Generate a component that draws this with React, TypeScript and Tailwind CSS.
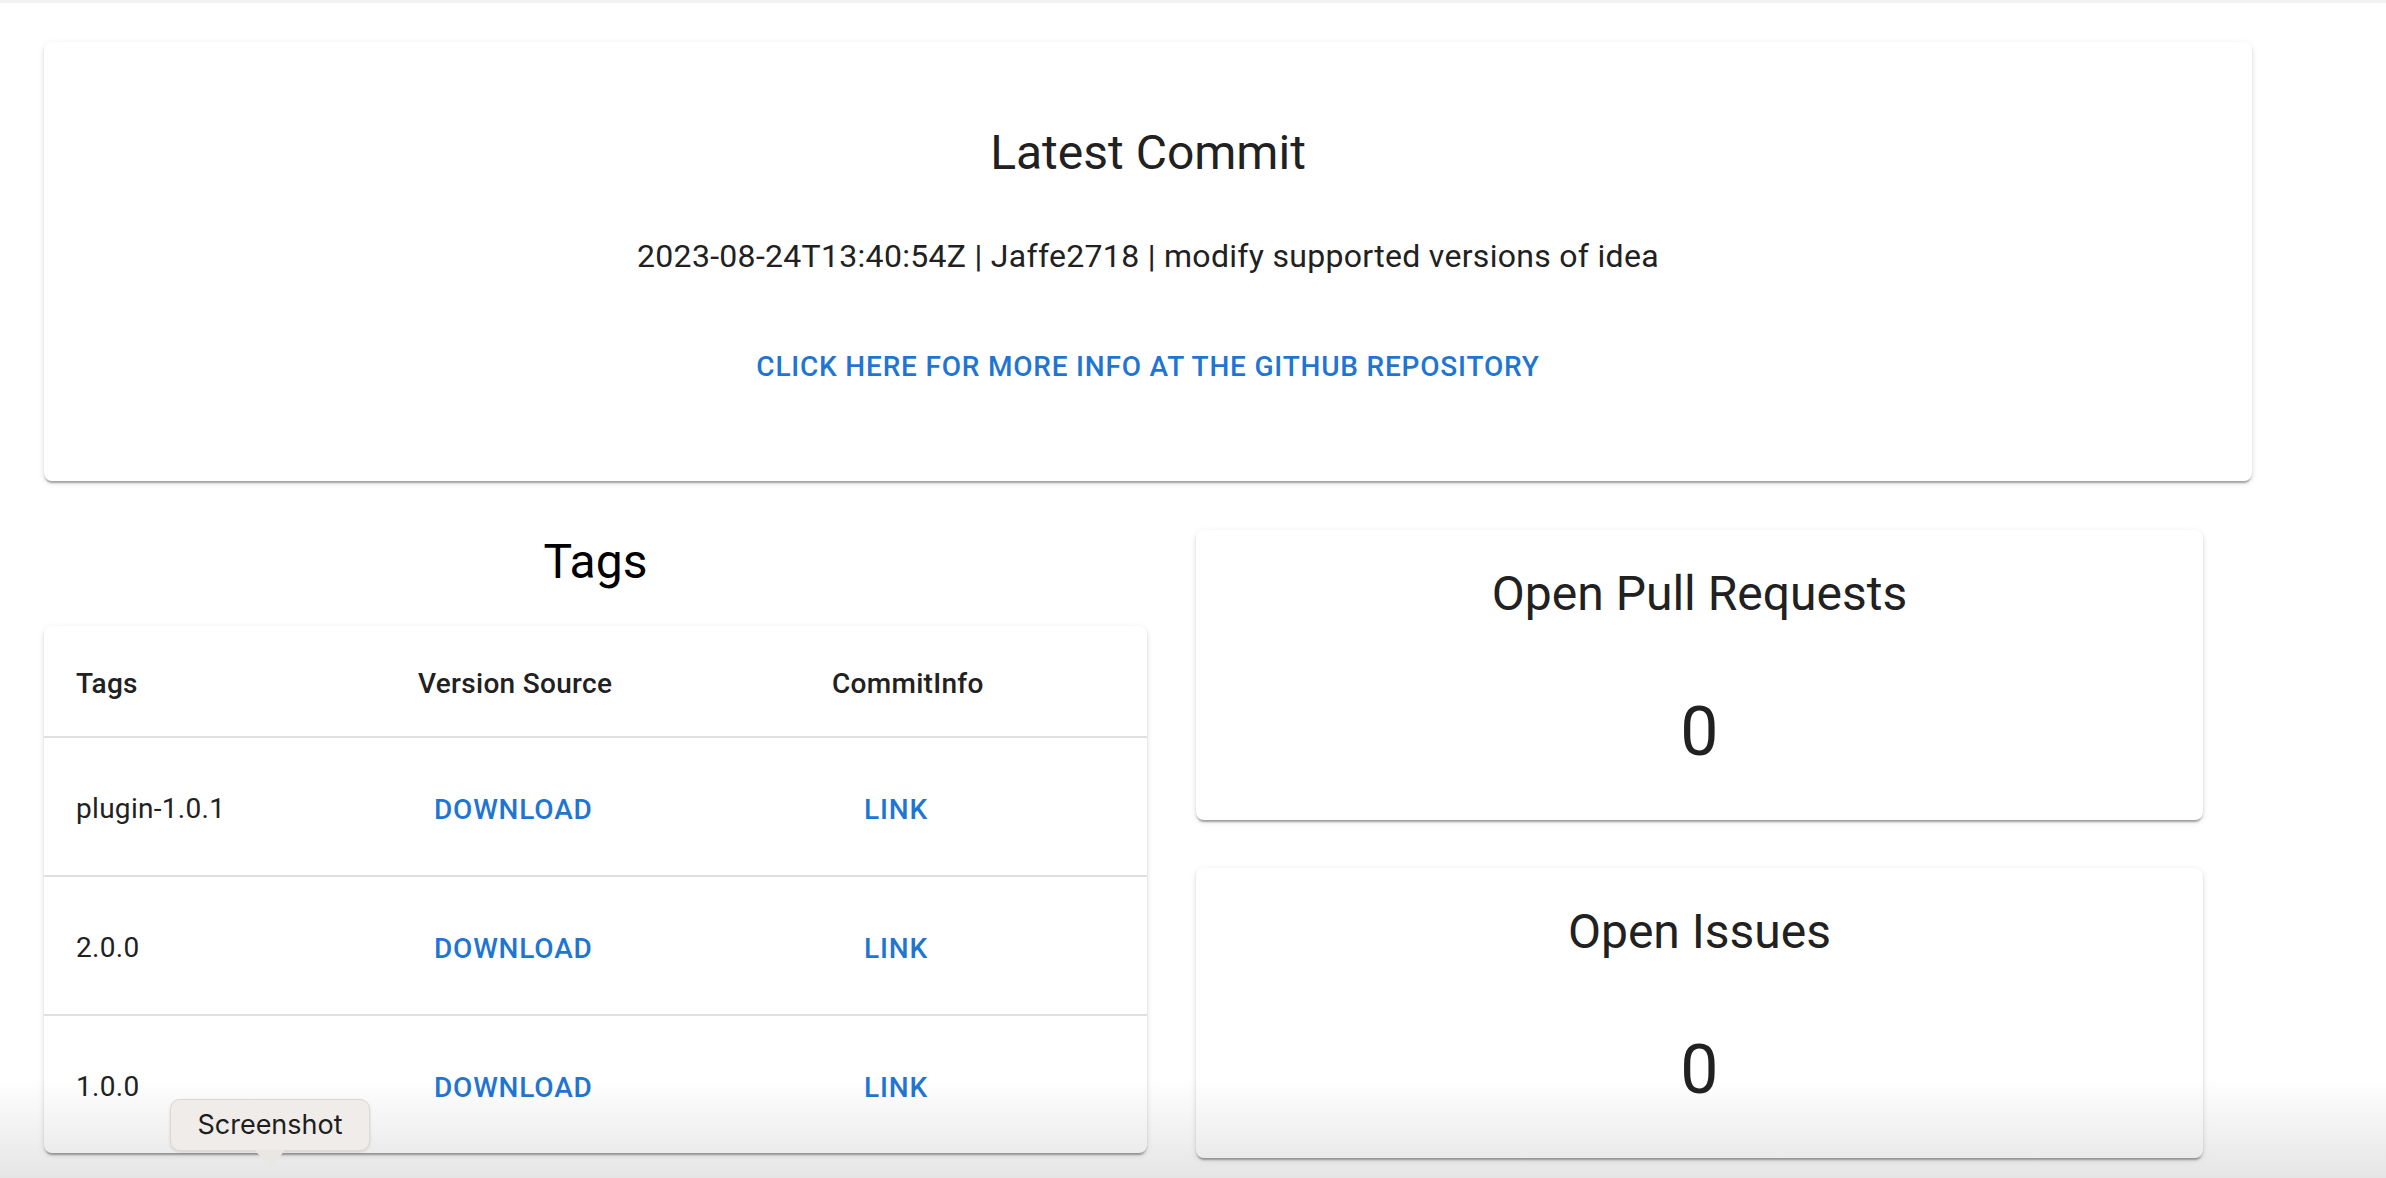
const cardShadow =
  'shadow-[0_4px_2px_-2px_rgba(0,0,0,0.2),0_2px_2px_0_rgba(0,0,0,0.14),0_2px_6px_0_rgba(0,0,0,0.12)]';

const tags = ['plugin-1.0.1', '2.0.0', '1.0.0'];

const TextButton = ({ label, className = '' }: { label: string; className?: string }) => (
  <button
    className={`min-w-[128px] rounded-[8px] px-[16px] py-[12px] text-[28px] leading-[49px] font-medium uppercase tracking-[0.8px] text-[#1f76d2] ${className}`}
  >
    {label}
  </button>
);

const CountCard = ({ title, count }: { title: string; count: number }) => (
  <div className={`bg-white rounded-[8px] ${cardShadow} flex flex-col items-center pt-[32px] pb-[46px]`}>
    <h5 className="text-[48px] leading-[64px] text-[#212121]">{title}</h5>
    <h4 className="mt-[64px] text-[68px] leading-[84px] tracking-[0.5px] text-[#212121]">{count}</h4>
  </div>
);

const TagsTable = () => (
  <div className={`bg-white rounded-[8px] ${cardShadow}`}>
    <div className="grid grid-cols-[342px_414px_1fr] h-[112px] pt-[6px] items-center border-b-2 border-[#e0e0e0] text-[28px] leading-[48px] font-medium text-[#212121] tracking-[0.3px]">
      <div className="pl-[32px]">Tags</div>
      <div className="pl-[32px]">Version Source</div>
      <div className="pl-[32px]">CommitInfo</div>
    </div>
    {tags.map((tag, i) => (
      <div
        key={tag}
        className={`grid grid-cols-[342px_414px_1fr] items-center pt-[5px] ${
          i < tags.length - 1 ? 'h-[139px] border-b-2 border-[#e0e0e0]' : 'h-[137px]'
        }`}
      >
        <div className="pl-[32px] text-[28px] leading-[40px] text-[#212121] tracking-[0.3px]">{tag}</div>
        <div className="pl-[32px]">
          <TextButton label="Download" />
        </div>
        <div className="pl-[32px]">
          <TextButton label="Link" />
        </div>
      </div>
    ))}
  </div>
);

export default function App() {
  return (
    <div className="relative w-full h-[1178px] overflow-hidden bg-white font-['Roboto',sans-serif]">
      <div className="h-[3px] bg-[#f2f2f2]" />

      <div className="ml-[44px] w-[2208px] pt-[39px]">
        {/* latest commit */}
        <div className={`bg-white rounded-[8px] ${cardShadow} flex flex-col items-center pt-[79px] pb-[78px]`}>
          <h5 className="text-[48px] leading-[64px] text-[#212121]">Latest Commit</h5>
          <p className="mt-[47px] text-[32px] leading-[48px] tracking-[0.3px] text-[#212121]">
            2023-08-24T13:40:54Z | Jaffe2718 | modify supported versions of idea
          </p>
          <TextButton label="Click here for more info at the GitHub repository" className="mt-[50px]" />
        </div>

        <div className="mt-[49px] flex gap-[49px]">
          <div className="w-[1103px] flex flex-col">
            <h5 className="text-center text-[48px] leading-[64px] text-black">Tags</h5>
            <div className="mt-[32px]">
              <TagsTable />
            </div>
          </div>
          <div className="w-[1007px] flex flex-col gap-[48px]">
            <CountCard title="Open Pull Requests" count={0} />
            <CountCard title="Open Issues" count={0} />
          </div>
        </div>
      </div>

      {/* screenshot overlay fade */}
      <div className="pointer-events-none absolute inset-x-0 bottom-0 h-[100px] bg-linear-to-b from-[rgba(0,0,0,0)] to-[rgba(0,0,0,0.1)]" />

      {/* tooltip */}
      <div className="absolute left-[170px] top-[1099px] flex flex-col items-center">
        <div className="w-[200px] h-[52px] rounded-[10px] bg-[#efece9] border border-[#dcd9d5] shadow-[0_1px_3px_rgba(0,0,0,0.12)] flex items-center justify-center font-['Inter',sans-serif] text-[27px] text-[#1e1e1e]">
          Screenshot
        </div>
        <svg width="30" height="19" viewBox="0 0 30 19" className="-mt-[1px]">
          <path d="M0 0 L30 0 L16 18 Q15 19 14 18 Z" fill="#e9e7e4" />
        </svg>
      </div>
    </div>
  );
}
